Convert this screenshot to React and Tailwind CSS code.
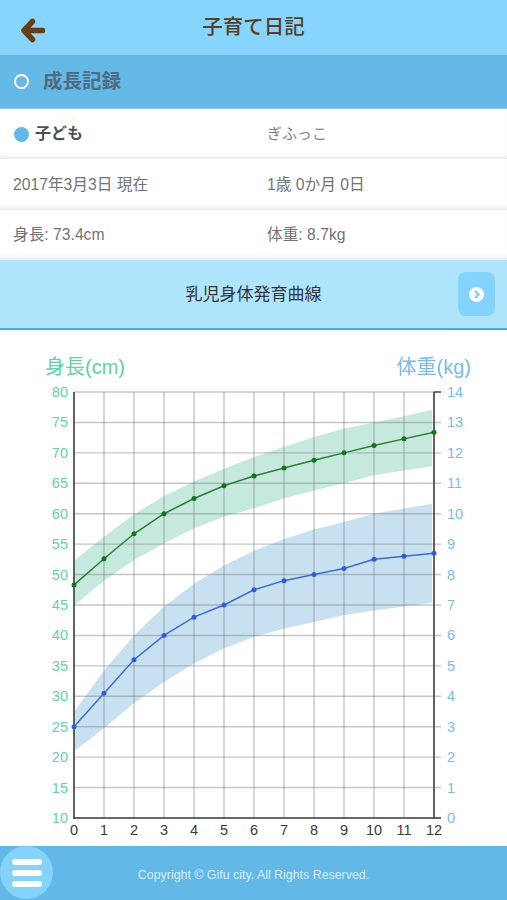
import React from 'react';

const jp = 'font-["Liberation_Sans","Noto_Sans_CJK_JP",sans-serif]';

const X0 = 74;
const STEP = 30;
const TOP = 7; // y of the 80cm / 14kg line inside the svg
const BOTTOM = 433;
const H = BOTTOM - TOP;

const xAt = (i) => X0 + i * STEP;
const yCm = (v) => BOTTOM - ((v - 10) / 70) * H;
const yKg = (v) => BOTTOM - (v / 14) * H;

const heights = [48.3, 52.6, 56.7, 60, 62.5, 64.6, 66.2, 67.5, 68.8, 70, 71.2, 72.3, 73.4];
const heightHi = [52.3, 56.2, 59.9, 62.9, 65.3, 67.4, 69.3, 71, 72.6, 74, 75, 76, 77.1];
const heightLo = [44.9, 49, 52.4, 55.1, 57.6, 59.5, 60.9, 62.5, 63.8, 65, 66.3, 67.1, 67.8];

const weights = [3, 4.1, 5.2, 6, 6.6, 7, 7.5, 7.8, 8, 8.2, 8.5, 8.6, 8.7];
const weightHi = [3.48, 4.85, 6, 6.95, 7.7, 8.3, 8.78, 9.17, 9.48, 9.73, 10, 10.17, 10.33];
const weightLo = [2.19, 2.95, 3.77, 4.47, 5.08, 5.57, 5.95, 6.22, 6.44, 6.66, 6.82, 6.95, 7.07];

const months = Array.from({ length: 13 }, (_, i) => i);
const kgTicks = Array.from({ length: 15 }, (_, i) => i);
const cmTicks = kgTicks.map((i) => 10 + i * 5);

const line = (data, y) => data.map((v, i) => `${xAt(i)},${y(v)}`).join(' ');
const band = (hi, lo, y) => {
  const end = hi.length - 1;
  const top = hi.map((v, i) => `${i === end ? xAt(i) - 2 : xAt(i)},${y(v)}`);
  const bottom = lo.map((v, i) => `${i === end ? xAt(i) - 2 : xAt(i)},${y(v)}`).reverse();
  return [...top, ...bottom].join(' ');
};

const GrowthChart = () => (
  <svg width="507" height="461" viewBox="0 0 507 461" className="block">
    <polygon points={band(heightHi, heightLo, yCm)} fill="#c6e9de" />
    <polygon points={band(weightHi, weightLo, yKg)} fill="#c8e1f1" />

    {kgTicks.map((t) => (
      <line key={t} x1={X0} x2={441} y1={yKg(t)} y2={yKg(t)} stroke="#777" strokeOpacity="0.42" strokeWidth="1.4" />
    ))}
    {months.map((m) => (
      <line key={m} x1={xAt(m)} x2={xAt(m)} y1={TOP} y2={BOTTOM} stroke="#777" strokeOpacity="0.42" strokeWidth="1.4" />
    ))}

    <line x1={X0} x2={X0} y1={TOP} y2={BOTTOM + 1} stroke="#555" strokeWidth="1.8" />
    <line x1={X0} x2={441} y1={BOTTOM} y2={BOTTOM} stroke="#444" strokeWidth="1.6" />
    <line x1={434} x2={434} y1={TOP} y2={BOTTOM + 1} stroke="#555" strokeWidth="1.8" />
    <line x1={434} x2={441} y1={TOP} y2={TOP} stroke="#444" strokeWidth="1.4" />

    <polyline points={line(heights, yCm)} fill="none" stroke="#2a7f32" strokeWidth="1.5" />
    {heights.map((v, i) => (
      <circle key={i} cx={xAt(i)} cy={yCm(v)} r="2.5" fill="#0c7a1a" />
    ))}
    <polyline points={line(weights, yKg)} fill="none" stroke="#3f68d6" strokeWidth="1.5" />
    {weights.map((v, i) => (
      <circle key={i} cx={xAt(i)} cy={yKg(v)} r="2.5" fill="#2f5cdc" />
    ))}

    <g fontFamily="'Liberation Sans', sans-serif" fontSize="14.5">
      {cmTicks.map((t) => (
        <text key={t} x="68" y={yCm(t) + 5} textAnchor="end" fill="#62d2ac">{t}</text>
      ))}
      {kgTicks.map((t) => (
        <text key={t} x="447" y={yKg(t) + 5} fill="#78bce9">{t}</text>
      ))}
      {months.map((m) => (
        <text key={m} x={xAt(m)} y="450" textAnchor="middle" fill="#3a3a3a">{m}</text>
      ))}
    </g>
  </svg>
);

const InfoRow = ({ left, right, className = '' }) => (
  <div className={`flex h-[50px] items-center bg-white shadow-[inset_0_-6px_6px_-5px_#dedede] text-[15.7px] text-[#737373] ${className}`}>
    <div className="w-[267px] shrink-0 pl-[13px]">{left}</div>
    <div>{right}</div>
  </div>
);

export default function App() {
  return (
    <div className={`flex h-[900px] w-[507px] flex-col overflow-hidden bg-white relative ${jp}`}>
      <header className="flex h-[55px] items-center justify-center bg-[#86d5ff] relative">
        <svg className="absolute left-[21px] top-[18px]" width="24" height="25" viewBox="0 0 24 25" fill="none">
          <path d="M11.5 3.5 3 12.5l8.5 9M4 12.5h17.5" stroke="#6b3c14" strokeWidth="5.5" strokeLinecap="round" strokeLinejoin="round" />
        </svg>
        <h1 className="text-[20.5px] font-medium text-[#5c3d20]">子育て日記</h1>
      </header>

      <div className="flex h-[54px] items-center bg-[#65b9e6] pl-[14px] border-b border-[#8ccdf0]">
        <span className="h-[15px] w-[15px] rounded-full border-[2.5px] border-white" />
        <h2 className="ml-[14px] text-[19.5px] font-bold text-[#4e6b80]">成長記録</h2>
      </div>

      <div className="flex h-[50px] items-center bg-white shadow-[inset_0_-6px_6px_-5px_#dedede]">
        <div className="flex w-[267px] shrink-0 items-center pl-[14px]">
          <span className="h-[15px] w-[15px] rounded-full bg-[#62b8e6]" />
          <span className="ml-[6px] text-[16px] font-bold text-[#505050]">子ども</span>
        </div>
        <div className="text-[15px] text-[#808080]">ぎふっこ</div>
      </div>
      <InfoRow left="2017年3月3日 現在" right="1歳 0か月 0日" className="h-[51px]" />
      <InfoRow left="身長: 73.4cm" right="体重: 8.7kg" />

      <div className="relative flex h-[70px] shrink-0 items-center justify-center border-b-2 border-[#3db4dd] bg-[#aee5fd] pt-[2px]">
        <span className="text-[17px] text-[#333]">乳児身体発育曲線</span>
        <div className="absolute right-[12px] top-[12px] flex h-[44px] w-[37px] items-center justify-center rounded-lg bg-[#84d3fc]">
          <svg width="15" height="15" viewBox="0 0 15 15">
            <circle cx="7.5" cy="7.5" r="7.5" fill="#fff" />
            <path d="M6 3.8 9.6 7.5 6 11.2" fill="none" stroke="#84d3fc" strokeWidth="2.4" />
          </svg>
        </div>
      </div>

      <main className="flex-1">
        <div className="flex h-[55px] items-end justify-between pb-[4px] pl-[45px] pr-[36px] text-[20px] leading-[28px]">
          <span className="text-[#5fd1aa]">身長(cm)</span>
          <span className="text-[#78bce9]">体重(kg)</span>
        </div>
        <GrowthChart />
      </main>

      <footer className="flex h-[54px] shrink-0 items-center justify-center bg-[#62b8e6] pt-[4px] text-[12.4px] text-white/75">
        Copyright © Gifu city. All Rights Reserved.
      </footer>
      <button className="absolute bottom-[1px] left-0 flex h-[53px] w-[53px] flex-col items-center justify-center gap-[5px] rounded-full bg-[#84d3fc]">
        <span className="h-[6px] w-[30px] rounded-full bg-white" />
        <span className="h-[6px] w-[30px] rounded-full bg-white" />
        <span className="h-[6px] w-[30px] rounded-full bg-white" />
      </button>
    </div>
  );
}
